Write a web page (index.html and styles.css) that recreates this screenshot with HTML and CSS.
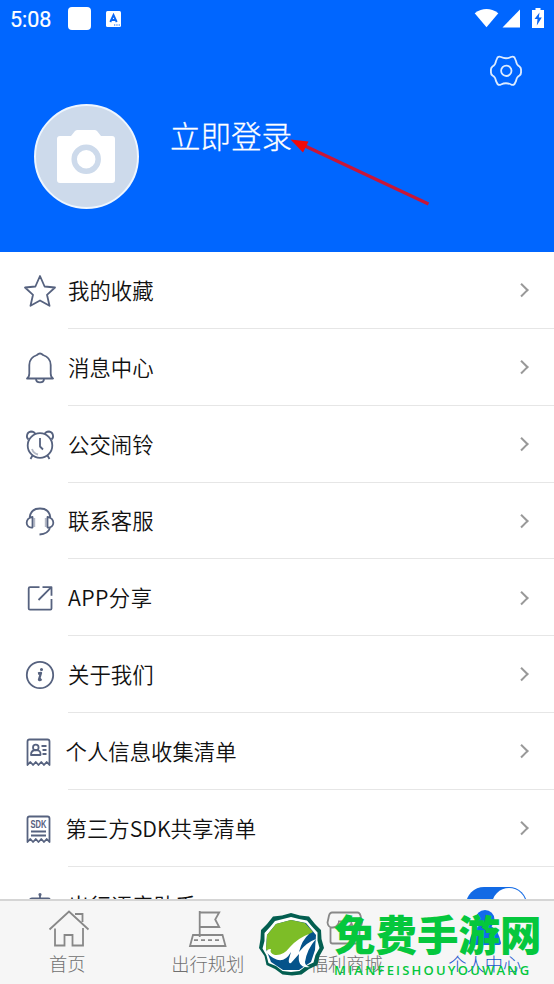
FILE: index.html
```html
<!DOCTYPE html>
<html lang="zh-CN">
<head>
<meta charset="utf-8">
<title>个人中心</title>
<link rel="stylesheet" href="styles.css">
</head>
<body>
<div class="screen">
  <header class="hero">
    <div class="status">
      <span class="time">5:08</span>
      <span class="app-square"></span>
      <svg class="app-letter" width="15" height="16" viewBox="0 0 15 16"><rect width="15" height="16" rx="1.5" fill="#fff"/><path d="M4.300 11 7.500 4l3.200 7M5.400 9h4.200" fill="none" stroke="#0866f5" stroke-width="1.900"/><path d="M8 14h6" stroke="#0866f5" stroke-width="1.200" stroke-dasharray="1.300 1"/></svg>
      <svg class="signals" width="72" height="22" viewBox="474 7 72 22" fill="#fff"><path d="M474.700 13.200Q486.500 5 498.300 13.200L486.500 27.300z"/><path d="M520 9.500V27.500H502.500z"/><path d="M535.500 8h5v2h3.500v18h-12V10h3.500z"/><path d="M539.500 12.500 534.500 19h3l-.7 6.500 5-8h-3z" fill="#0866f5"/></svg>
    </div>
    <svg class="settings" width="34" height="34" viewBox="0 0 34 34" fill="none" stroke="#dcebff" stroke-width="1.800" stroke-linejoin="round"><path d="M8.500 3.500Q10 2 12 3Q17 5.500 22 3Q24 2 25.500 3.500L27 7Q27.500 11 30.500 12.500Q32.500 14 32 17Q32.500 20 30.500 21.500Q27.500 23 27 27L25.500 30Q24 31.500 22 30.500Q17 28 12 30.500Q10 31.500 8.500 30L7 27Q6.500 23 3.500 21.500Q1.500 20 2 17Q1.500 14 3.500 12.500Q6.500 11 7 7z"/><circle cx="17.300" cy="16.800" r="5.200"/></svg>
    <div class="profile">
      <div class="avatar"><svg width="60" height="54" viewBox="0 0 60 54"><path d="M4 6h11l4-5q1-1 2.500-1h17q1.500 0 2.500 1l4 5h11q3 0 3 3v41q0 3-3 3H4q-3 0-3-3V9q0-3 3-3z" fill="#fff"/><circle cx="30.200" cy="29.300" r="12" fill="#fff" stroke="#cddaeb" stroke-width="5.500"/></svg></div>
      <span class="login">立即登录</span>
    </div>
    <svg class="arrow" width="142" height="72" viewBox="290 136 142 72"><path d="M304 145.500 428.500 204" stroke="#c81638" stroke-width="3.200"/><path d="M290.500 139.500 308.500 141.500 303 152.500z" fill="#f20808"/></svg>
  </header>

  <main class="menu">
    <div class="row"><svg class="icon" viewBox="0 0 32 32"><path d="m16 1 4.600 10.500L31 12.500l-8 7.300 2.500 11L16 25.500l-9.500 5.300 2.500-11-8-7.300 10.400-1z"/></svg><div class="item"><span>我的收藏</span><i class="chevron"></i></div></div>
    <div class="row"><svg class="icon" viewBox="0 0 32 32"><path d="M3 26.500q2.300-1.500 2.300-5V13C5.300 6.500 10 4 13 3q3-3 6 0c3 1 7.700 3.500 7.700 10v8.500q0 3.500 2.300 5zM12 27q0 3.300 4 3.300t4-3.300"/></svg><div class="item"><span>消息中心</span><i class="chevron"></i></div></div>
    <div class="row"><svg class="icon" viewBox="0 0 32 32"><circle cx="16" cy="16.500" r="12.300"/><path d="M4.500 10.500C1.500 8 3 3 7 2.500q3.500 0 4.500 3M27.500 10.500C30.500 8 29 3 25 2.500q-3.500 0-4.500 3M8.500 26.500 6.500 30M23.500 26.500l2 3.500M16 9v8.500l3 3"/><path class="faint" d="M8 20q1.500 4.500 6 5.500"/></svg><div class="item"><span>公交闹铃</span><i class="chevron"></i></div></div>
    <div class="row"><svg class="icon" viewBox="0 0 32 32"><path d="M5.500 12C6 6 10 2.500 16 2.500s10 3.500 10.500 9.500M8.500 11v10.500C1 22.500.500 12 8.500 11zM23.500 11v10.500C31 22.500 31.500 12 23.500 11zM26 22q-2 6-10.500 6.500"/><path class="faint" d="M10.300 12v9M21.700 12v9"/></svg><div class="item"><span>联系客服</span><i class="chevron"></i></div></div>
    <div class="row"><svg class="icon" viewBox="0 0 32 32"><path d="M15.500 5.200H6q-1.300 0-1.300 1.300v20Q4.700 27.700 6 27.700h20.500q1 0 1-1.200V17M14.500 18 27.300 5.200M18.500 5.200h9v8.500"/></svg><div class="item"><span class="share">APP分享</span><i class="chevron"></i></div></div>
    <div class="row"><svg class="icon" viewBox="0 0 32 32"><circle cx="16" cy="16" r="13.200"/><path d="m14 14.500 3-.5-2 6.500q0 1.500 2.500-.5" stroke-width="2.300"/><circle cx="17.500" cy="10.500" r=".8" stroke-width="1.500"/></svg><div class="item"><span>关于我们</span><i class="chevron"></i></div></div>
    <div class="row"><svg class="icon" viewBox="0 0 32 32"><path d="M3.500 29V5.500q0-2 2-2h18q2 0 2 2V29l-2.800-3-2.700 3-2.700-3-2.800 3-2.700-3-2.700 3-2.800-3zM7 19q0-5 5-5t4.500 5z"/><circle cx="11.800" cy="11.500" r="2.800"/><path d="M17.500 10h5M18.500 14h4M18.500 18h4"/></svg><div class="item"><span class="wide">个人信息收集清单</span><i class="chevron"></i></div></div>
    <div class="row"><svg class="icon" viewBox="0 0 32 32"><path d="M3.500 29V5.500q0-2 2-2h18q2 0 2 2V29l-2.800-3-2.700 3-2.700-3-2.800 3-2.700-3-2.700 3-2.800-3zM7 18.500h15M7 22.500h15"/><text x="6.500" y="15" textLength="16" lengthAdjust="spacingAndGlyphs">SDK</text></svg><div class="item"><span class="wide">第三方SDK共享清单</span><i class="chevron"></i></div></div>
    <div class="row"><svg class="icon" viewBox="0 0 32 32"><circle cx="16" cy="4.500" r=".7"/><path d="M16 4.500v4M6 27V10.500q0-2 2-2h16q2 0 2 2V27z"/></svg><div class="item last"><span>出行语音助手</span><i class="toggle"></i></div></div>
  </main>

  <nav class="tabs">
    <div class="tab home"><svg width="44" height="42" viewBox="47 908 44 42"><path d="m49.500 929.500 19.500-18 19.500 18M55 928.500V945.500h9.500V935h8v10.500H83V928M75 914h7.500v8"/></svg><span>首页</span></div>
    <div class="tab"><svg width="44" height="42" viewBox="186 908 44 42"><path d="M199.700 911v26M199.700 912.500h19.500l-4 7 4 7.500h-19.500M193 935h29.500l3 11h-35.500z"/><path d="M194 940.200h28" stroke-dasharray="4 3"/></svg><span>出行规划</span></div>
    <div class="tab"><svg width="44" height="42" viewBox="325 908 44 42"><path d="M333 912.500h25.500q2 0 3 3l1.500 7q-.5 5-5 5-4.500 0-5.500-4-2 4-6.500 4t-6.500-4q-2 4-6 4-4.500 0-5-5l1.500-7q1-3 3-3zM331.500 927.500v14q0 2 2 2h25q2 0 2-2v-14M339 921.500h13"/></svg><span>福利商城</span></div>
    <div class="tab active"><svg width="44" height="42" viewBox="463 908 44 42"><circle cx="485" cy="919.500" r="9.500"/><path d="M479 926h12q8 5 10 17 0 2-3 2h-26q-3 0-3-2 2-12 10-17z"/></svg><span>个人中心</span></div>
  </nav>

  <div class="watermark">
    <svg width="68" height="66" viewBox="0 0 68 66"><path d="m34 2 9 2.500 9 1 6 7.500 6 6 .5 9L67 37l-4.500 8-2 9-8.500 4-7.500 5.500-9.500 1-9.500-1-7.500-5.500-8.500-4-2-9L2 37l1.500-9 .5-9 6-6 6-7.500 9-1z" fill="#035e50"/><path d="m34 6 8 2 8 1.500 5 6 5.500 6v8l2 7.500-4 7-2 7.500-7.500 3.500-6.500 5-8.500 1-8.500-1-6.500-5L11.500 52l-2-7.500-4-7 2-7.500v-8l5.500-6 5-6L26 8z" fill="#fff"/><path d="m34 9 15 3 10 12-1 15-4 12-12 8H26L14 51 9 38l1-14 9-11z" fill="#05538a"/><path d="m34 9 14 3 8 9q-8 3-15 14Q34 38 29 44 21 48 11 41l-2-3 1-14 9-11z" fill="#7dbd27"/><path d="M10 42q-1-4 4-4-2 4 4 6 8 1 15-8 8-9 19-13-7 6-10 18 8-10 17-13-9 10-11 23 0 4 5 5-13 2-11-13l-8 9q-3 1-2-4l2-7q-9 16-24 1z" fill="#fff"/></svg>
    <div class="brand"><span class="brand-name">免费手游网</span><span class="brand-latin">MIANFEISHOUYOUWANG</span></div>
  </div>
</div>
</body>
</html>
```

FILE: styles.css
```css
* { box-sizing: border-box; }
body { margin: 0; background: #fff; font-family: "Noto Sans CJK SC", "Noto Sans", sans-serif; }
.screen { position: relative; width: 554px; height: 984px; overflow: hidden; display: flex; flex-direction: column; }
.hero { position: relative; flex: none; height: 252px; background: #0066ff; display: flex; flex-direction: column; }
.status { display: flex; align-items: center; height: 38px; padding: 0 8px 0 10px; }
.time { width: 58px; padding-top: 1px; color: #fff; font: 400 21.500px/38px Roboto, sans-serif; -webkit-text-stroke: .2px #fff; }
.app-square { width: 23px; height: 23px; margin-top: -1px; border-radius: 4px; background: #fff; }
.app-letter { margin-left: 15px; }
.signals { margin: -2px 0 0 auto; }
.settings { align-self: flex-end; margin: 16px 31px 0 0; }
.profile { display: flex; margin: 16px 0 0 34px; }
.avatar { width: 105px; height: 105px; border: 2px solid #eef6ff; border-radius: 50%; background: #cddaeb; display: flex; align-items: center; justify-content: center; }
.avatar svg { margin: 1px 2px 0 0; }
.login { margin: 9px 0 0 31px; color: #fff; font-size: 30.500px; line-height: 44px; font-weight: 300; -webkit-text-stroke: .3px #fff; }
.arrow { position: absolute; left: 290px; top: 136px; }
.menu { flex: 1; min-height: 0; overflow: hidden; }
.row { display: flex; height: 76.850px; }
.icon { flex: none; width: 32px; height: 32px; margin: 23px 12px 0 24px; fill: none; stroke: #56627f; stroke-width: 1.800; stroke-linejoin: round; }
.icon .faint { opacity: .45; }
.icon text { fill: #56627f; stroke: none; font: 700 10px "Liberation Sans", sans-serif; }
.item { flex: 1; display: flex; align-items: center; justify-content: space-between; padding-right: 27px; border-bottom: 1.500px solid #e6e6e6; color: #111; font-size: 21.400px; font-weight: 350; }
.item span { margin-top: -1px; }
.share { letter-spacing: .4px; }
.wide { margin-left: -2.500px; }
.chevron { width: 9.500px; height: 9.500px; margin-right: 1px; border: solid #999; border-width: 2px 2px 0 0; transform: rotate(45deg); }
.toggle { width: 61px; height: 36px; border-radius: 18px; background: #126ae5; display: flex; justify-content: flex-end; padding: 1px; margin-top: 1px; }
.toggle::after { content: ""; width: 34px; height: 34px; border-radius: 50%; background: #fff; }
.tabs { flex: none; height: 85px; border-top: 2px solid #d5d5d5; background: #f6f6f6; display: grid; grid-template-columns: repeat(4, 1fr); }
.tab { display: flex; flex-direction: column; align-items: center; padding-top: 7px; color: #707070; font-size: 18.300px; line-height: 26px; font-weight: 300; }
.tab svg { fill: none; stroke: #888; stroke-width: 1.800; }
.tab.home span { margin-right: 4px; }
.active { color: #2255cc; }
.tab.active svg { fill: #126aed; stroke: none; }
.watermark { position: absolute; left: 257px; top: 911px; display: flex; }
.brand { display: flex; flex-direction: column; margin-left: 9px; color: #05c73d; white-space: nowrap; }
.brand-name { margin-top: -3px; font-size: 41.500px; line-height: 50px; font-weight: 900; }
.brand-latin { margin-top: 5px; font: 600 13px/15px "Open Sans", sans-serif; letter-spacing: 2.200px; }
```
